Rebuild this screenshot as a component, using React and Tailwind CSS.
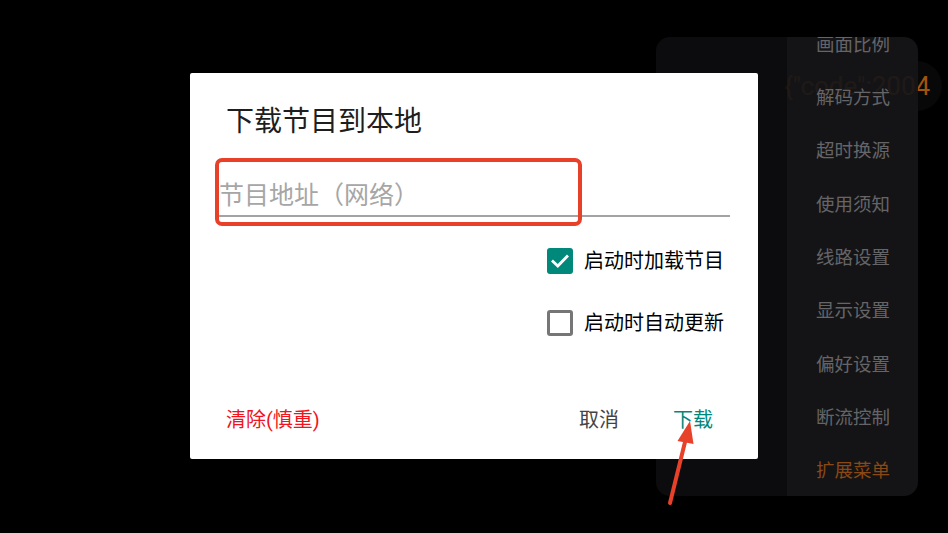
import React from "react";

const FONT = { fontFamily: 'Roboto, "Noto Sans CJK SC", sans-serif' };

const menu = [
  "画面比例",
  "解码方式",
  "超时换源",
  "使用须知",
  "线路设置",
  "显示设置",
  "偏好设置",
  "断流控制",
];

export default function App() {
  return (
    <div className="relative w-[948px] h-[533px] bg-black overflow-hidden" style={FONT}>
      {/* toast behind menu */}
      <div className="absolute left-[770px] top-[61px] w-[172px] h-[50px] rounded-full bg-[#080808] flex items-center pl-[14px]">
        <span className="text-[26px] leading-none text-[#a4530c] whitespace-nowrap">{'{"code":2004'}</span>
      </div>

      {/* side menu */}
      <div className="absolute left-[656px] top-[37px] w-[262px] h-[459px] rounded-[14px] overflow-hidden flex">
        <div className="w-[131px] h-full bg-[#0d0d0f]/[0.93]" />
        <div className="w-[131px] h-full bg-[#151519]/[0.93] pl-[29px]">
          <div className="-mt-[18px] flex flex-col">
            {menu.map((m) => (
              <div key={m} className="h-[53.33px] flex items-center text-[18.5px] text-[#656568] whitespace-nowrap">
                {m}
              </div>
            ))}
            <div className="h-[53.33px] flex items-center text-[18.5px] text-[#8a4812] whitespace-nowrap">
              扩展菜单
            </div>
          </div>
        </div>
      </div>

      {/* dialog */}
      <div className="absolute left-[190px] top-[73px] w-[568px] h-[386px] bg-white rounded-[2px] flex flex-col">
        <div className="pl-[36px] pt-[29px] h-[69px] text-[28px] leading-[40px] text-[#1e1e1e]">
          下载节目到本地
        </div>
        <div className="mt-[37px] ml-[29px] mr-[28px] border-b-2 border-[#a3a3a3] pb-[2px]">
          <div className="h-[34px] text-[25px] leading-[34px] text-[#a6a6a6]">节目地址（网络）</div>
        </div>
        <div className="mt-[20px] flex flex-col items-end pr-[34px] gap-[14px]">
          <div className="h-[48px] flex items-center gap-[11px]">
            <div className="w-[26px] h-[26px] rounded-[3px] bg-[#00887a] flex items-center justify-center">
              <svg width="20" height="20" viewBox="0 0 20 20" fill="none">
                <path d="M3 10.5 L7.8 15 L17 5.5" stroke="white" strokeWidth="2.8" strokeLinecap="square" />
              </svg>
            </div>
            <span className="text-[20px] leading-none text-black">启动时加载节目</span>
          </div>
          <div className="h-[48px] flex items-center gap-[11px]">
            <div className="w-[26px] h-[26px] rounded-[3px] border-[3px] border-[#767676]" />
            <span className="text-[20px] leading-none text-black">启动时自动更新</span>
          </div>
        </div>
        <div className="mt-[49px] h-[48px] flex items-center pl-[36px] pr-[45px] text-[20px]">
          <span className="text-[#f0141c]">清除(慎重)</span>
          <span className="ml-auto text-[#444444]">取消</span>
          <span className="ml-[54px] text-[#00887a]">下载</span>
        </div>
      </div>

      {/* annotation rectangle */}
      <div className="absolute left-[215px] top-[158px] w-[367px] h-[68px] border-[4px] border-[#e8412a] rounded-[7px]" />

      {/* annotation arrow */}
      <svg className="absolute left-0 top-0 pointer-events-none" width="948" height="533" viewBox="0 0 948 533">
        <line x1="670" y1="503" x2="686" y2="438" stroke="#e8412a" strokeWidth="4" strokeLinecap="round" />
        <polygon points="690,421 677.5,441 693.5,444" fill="#e8412a" />
      </svg>
    </div>
  );
}
